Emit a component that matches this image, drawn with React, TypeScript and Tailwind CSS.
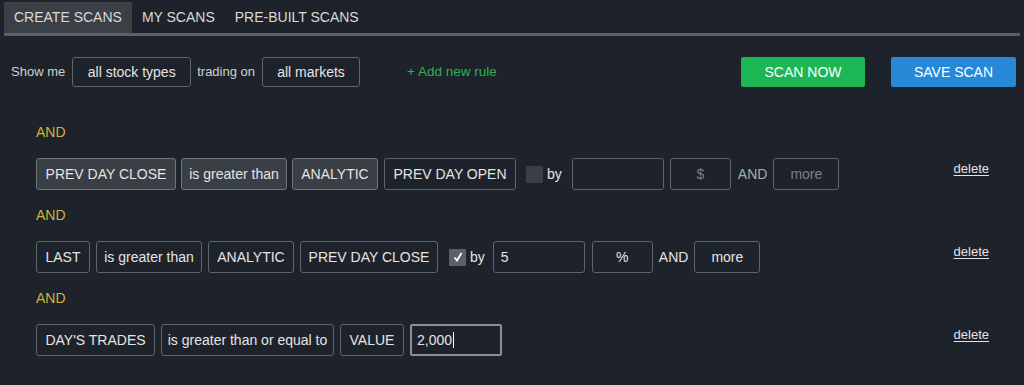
import React from "react";

const font = { fontFamily: '"Liberation Sans", Arial, sans-serif' };

const Box = ({
  children,
  filled = false,
  dim = false,
  className = "",
}: {
  children?: React.ReactNode;
  filled?: boolean;
  dim?: boolean;
  className?: string;
}) => (
  <div
    className={`flex h-[32px] shrink-0 items-center justify-center whitespace-nowrap rounded-[3px] border px-[2px] text-[14px] ${
      filled ? "border-[#6f737a] bg-[#3a3e45]" : "border-[#5f636a] bg-[#1e232b]"
    } ${dim ? "text-[#7c8087]" : "text-[#e4e4e4]"} ${className}`}
  >
    {children}
  </div>
);

const Check = ({ checked }: { checked: boolean }) => (
  <div
    className={`flex h-[17px] w-[17px] items-center justify-center rounded-[1px] ${
      checked ? "bg-[#5b6068]" : "bg-[#3a3f47]"
    }`}
  >
    {checked && (
      <svg width="12" height="12" viewBox="0 0 12 12">
        <path d="M2.5 6.5 L5 9.5 L9.5 2" stroke="#fff" strokeWidth="1.8" fill="none" />
      </svg>
    )}
  </div>
);

const AndLabel = () => (
  <div className="flex h-[20px] items-center text-[14px] text-[#cdb53a]">AND</div>
);

const Delete = () => (
  <a className="mt-[1px] self-start text-[13px] text-[#e2e2e2] underline underline-offset-2">delete</a>
);

export default function App() {
  return (
    <div style={font} className="h-[385px] w-[1024px] overflow-hidden bg-[#1e232b] text-[#e4e4e4]">
      {/* tabs */}
      <div className="px-[4px] pt-[2px]">
        <div className="flex h-[31px] items-stretch whitespace-nowrap text-[14px] text-[#dadada]">
          <div className="flex items-center bg-[#3b3f46] px-[10px]">CREATE SCANS</div>
          <div className="flex items-center px-[10px]">MY SCANS</div>
          <div className="flex items-center px-[10px]">PRE-BUILT SCANS</div>
        </div>
        <div className="h-[3px] bg-[#5b6067]" />
      </div>

      {/* toolbar */}
      <div className="mt-[21px] flex h-[30px] items-center whitespace-nowrap pl-[11px] pr-[8px] text-[13px]">
        <span className="text-[#d0d0d0]">Show me</span>
        <div className="ml-[7px] flex h-[30px] w-[119px] items-center justify-center rounded-[3px] border border-[#5f636a] text-[14px]">
          all stock types
        </div>
        <span className="ml-[6px] text-[#d0d0d0]">trading on</span>
        <div className="ml-[7px] flex h-[30px] w-[98px] items-center justify-center rounded-[3px] border border-[#5f636a] text-[14px]">
          all markets
        </div>
        <span className="ml-[47px] text-[13.5px] text-[#2fb24f]">+ Add new rule</span>
        <div className="flex-1" />
        <button className="flex h-[30px] w-[124px] items-center justify-center rounded-[2px] bg-[#1cb655] text-[14px] text-white">
          SCAN NOW
        </button>
        <button className="ml-[26px] flex h-[30px] w-[125px] items-center justify-center rounded-[2px] bg-[#2589d8] text-[14px] text-white">
          SAVE SCAN
        </button>
      </div>

      {/* rules */}
      <div className="mt-[35px] pl-[36px] pr-[35px]">
        <AndLabel />
        <div className="mt-[16px] flex items-center">
          <div className="flex flex-1 items-center gap-[5px]">
            <Box filled className="w-[140px]">PREV DAY CLOSE</Box>
            <Box filled className="w-[106px]">is greater than</Box>
            <Box filled className="w-[86px]">ANALYTIC</Box>
            <Box className="ml-[1px] w-[132px]">PREV DAY OPEN</Box>
            <div className="ml-[5px]">
              <Check checked={false} />
            </div>
            <span className="-ml-[1px] text-[14px]">by</span>
            <Box className="ml-[5px] w-[92px]" />
            <Box dim className="ml-[1px] w-[61px]">$</Box>
            <span className="ml-[2px] text-[14px] text-[#a8abb0]">AND</span>
            <Box dim className="ml-[1px] w-[66px]">more</Box>
          </div>
          <Delete />
        </div>

        <div className="mt-[15px]">
          <AndLabel />
        </div>
        <div className="mt-[16px] flex items-center">
          <div className="flex flex-1 items-center gap-[5px]">
            <Box className="w-[54px]">LAST</Box>
            <Box className="ml-[1px] w-[106px]">is greater than</Box>
            <Box className="ml-[1px] w-[86px]">ANALYTIC</Box>
            <Box className="ml-[1px] w-[138px]">PREV DAY CLOSE</Box>
            <div className="ml-[6px]">
              <Check checked />
            </div>
            <span className="-ml-[1px] text-[14px]">by</span>
            <Box className="ml-[3px] w-[92px] !justify-start px-[7px]">5</Box>
            <Box className="ml-[2px] w-[61px]">%</Box>
            <span className="ml-[1px] text-[14px] text-[#e4e4e4]">AND</span>
            <Box className="ml-[1px] w-[66px]">more</Box>
          </div>
          <Delete />
        </div>

        <div className="mt-[15px]">
          <AndLabel />
        </div>
        <div className="mt-[16px] flex items-center">
          <div className="flex flex-1 items-center gap-[5px]">
            <Box className="w-[119px]">DAY'S TRADES</Box>
            <Box className="ml-[1px] w-[173px]">is greater than or equal to</Box>
            <Box className="ml-[1px] w-[64px]">VALUE</Box>
            <div className="ml-[1px] flex h-[32px] w-[92px] items-center rounded-[2px] border-2 border-[#8b8f95] px-[5px] text-[14px]">
              2,000<span className="ml-[1px] h-[16px] w-px bg-white" />
            </div>
          </div>
          <Delete />
        </div>
      </div>
    </div>
  );
}
